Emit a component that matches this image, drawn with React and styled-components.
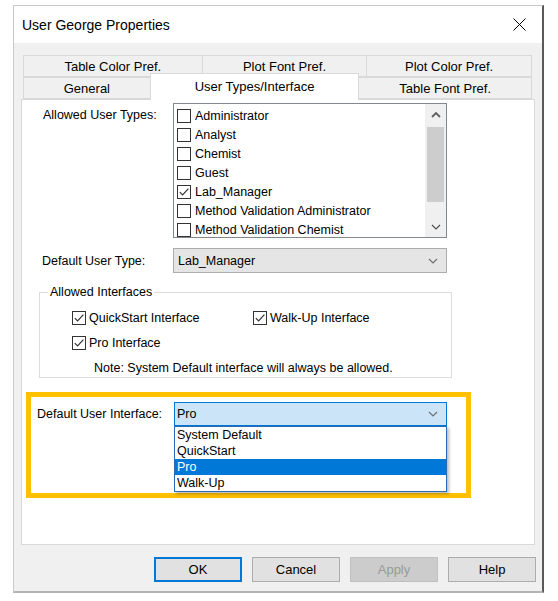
import React from "react";
import styled, { createGlobalStyle } from "styled-components";

const GlobalStyle = createGlobalStyle`
  body {
    margin: 0;
    background: #ffffff;
    font-family: "Liberation Sans", Arial, sans-serif;
    color: #000;
  }
  * { box-sizing: border-box; }
`;

const Page = styled.div`
  padding: 5px 0 0 13px;
`;

const Window = styled.div`
  width: 531px;
  height: 588px;
  display: flex;
  flex-direction: column;
  background: #f0f0f0;
  border-left: 1px solid #c8c8c8;
  border-top: 1px solid #c8c8c8;
  border-right: 2px solid #5a5a5a;
  border-bottom: 2px solid #b4b4b4;
`;

const TitleBar = styled.div`
  height: 37px;
  background: #ffffff;
  display: flex;
  align-items: center;
  justify-content: space-between;
  padding: 0 16px 0 8px;
  font-size: 14px;
`;

const Body = styled.div`
  flex: 1;
  padding: 12px 7px 0 7px;
  display: flex;
  flex-direction: column;
`;

const TabStrip = styled.div`
  padding: 0 3px 0 2px;
`;

const TabRow = styled.div`
  display: flex;
  align-items: flex-end;
  height: 22px;
`;

const Tab = styled.div`
  width: ${(p) => p.$w}px;
  height: ${(p) => (p.$active ? 27 : 22)}px;
  margin-bottom: ${(p) => (p.$active ? -1 : 0)}px;
  margin-left: -1px;
  position: ${(p) => (p.$active ? "relative" : "static")};
  z-index: ${(p) => (p.$active ? 2 : "auto")};
  background: ${(p) => (p.$active ? "#ffffff" : "#f0f0f0")};
  border: 1px solid #d9d9d9;
  border-bottom: ${(p) => (p.$active ? "none" : "1px solid #d9d9d9")};
  font-size: 13px;
  display: flex;
  align-items: center;
  justify-content: center;
  padding-bottom: ${(p) => (p.$active ? 2 : 0)}px;
  &:first-child { margin-left: 0; }
`;

const Panel = styled.div`
  height: 446px;
  background: #ffffff;
  border: 1px solid #d9d9d9;
  padding: 3px 0 0 0;
  display: flex;
  flex-direction: column;
`;

const FieldRow = styled.div`
  display: grid;
  grid-template-columns: 151px 274px;
  align-items: ${(p) => (p.$center ? "center" : "start")};
  margin-top: ${(p) => p.$top || 0}px;
`;

const Label = styled.div`
  font-size: 12.5px;
  padding-left: ${(p) => p.$indent}px;
  padding-top: ${(p) => p.$dy || 0}px;
  white-space: nowrap;
`;

const ListBox = styled.div`
  height: 135px;
  border: 1px solid #828790;
  display: flex;
  background: #fff;
`;

const ListItems = styled.div`
  flex: 1;
  overflow: hidden;
  padding-top: 2px;
`;

const ListItem = styled.div`
  height: 19px;
  display: flex;
  align-items: center;
  gap: 4px;
  padding-left: 3px;
  font-size: 12.5px;
  white-space: nowrap;
`;

const Scrollbar = styled.div`
  width: 21px;
  background: #f0f0f0;
  display: flex;
  flex-direction: column;
  align-items: center;
`;

const ScrollArrow = styled.div`
  height: 21px;
  display: flex;
  align-items: center;
  justify-content: center;
`;

const Thumb = styled.div`
  width: 17px;
  height: 75px;
  margin-top: 2px;
  background: #cdcdcd;
`;

const Spacer = styled.div`
  flex: 1;
`;

const Box = styled.span`
  width: 14px;
  height: 14px;
  flex: none;
  border: 1px solid #333333;
  background: #ffffff;
  display: inline-flex;
  align-items: center;
  justify-content: center;
`;

const Combo = styled.div`
  height: ${(p) => p.$h}px;
  display: flex;
  align-items: center;
  justify-content: space-between;
  padding: 0 8px 0 ${(p) => p.$pad}px;
  font-size: 12.5px;
  background: ${(p) => (p.$focus ? "#cce4f7" : "#e5e5e5")};
  border: 1px solid ${(p) => (p.$focus ? "#0078d7" : "#adadad")};
`;

const Group = styled.fieldset`
  margin: 12px 0 0 17px;
  width: 413px;
  height: 93px;
  padding: 0;
  border: 1px solid #dcdcdc;
  min-width: 0;
`;

const Legend = styled.legend`
  margin-left: 8px;
  padding: 0 2px;
  font-size: 12.5px;
  line-height: 14px;
`;

const InterfaceGrid = styled.div`
  display: grid;
  grid-template-columns: 181px auto;
  grid-auto-rows: 25px;
  align-items: center;
  padding-left: 32px;
  margin-top: 6px;
`;

const Option = styled.label`
  display: flex;
  align-items: center;
  gap: 3px;
  font-size: 12.5px;
  white-space: nowrap;
`;

const Note = styled.div`
  font-size: 12.5px;
  padding-left: 54px;
  margin-top: 4px;
  line-height: 18px;
`;

const Highlight = styled.div`
  margin: 14px 0 0 4px;
  width: 445px;
  height: 106px;
  border: 5px solid #ffc000;
  padding: 5px 0 1px 6px;
  display: grid;
  grid-template-columns: 137px 273px;
  align-items: start;
`;

const InlineLabel = styled.div`
  font-size: 12.5px;
  line-height: 24px;
  white-space: nowrap;
`;

const DropColumn = styled.div`
  display: flex;
  flex-direction: column;
`;

const DropList = styled.div`
  border: 1px solid #2b6cb0;
  background: #ffffff;
  box-shadow: 2px 2px 3px rgba(0, 0, 0, 0.28);
`;

const DropItem = styled.div`
  height: 16px;
  line-height: 16px;
  padding-left: 2px;
  font-size: 12.5px;
  background: ${(p) => (p.$selected ? "#0078d7" : "transparent")};
  color: ${(p) => (p.$selected ? "#ffffff" : "#000000")};
`;

const ButtonRow = styled.div`
  display: flex;
  justify-content: flex-end;
  gap: 10px;
  margin: 12px -1px 0 0;
`;

const Button = styled.button`
  width: 88px;
  height: 25px;
  font-family: inherit;
  font-size: 13px;
  padding: 0;
  background: ${(p) => (p.disabled ? "#cccccc" : "#e1e1e1")};
  color: ${(p) => (p.disabled ? "#9a9a9a" : "#000000")};
  border: ${(p) =>
    p.$default ? "2px solid #0078d7" : p.disabled ? "1px solid #bfbfbf" : "1px solid #adadad"};
`;

const CheckBox = ({ checked }) => (
  <Box>
    {checked && (
      <svg width="12" height="12" viewBox="0 0 12 12">
        <path d="M1.8 6.2 L4.6 9 L10.4 2.6" fill="none" stroke="#333" strokeWidth="1.2" />
      </svg>
    )}
  </Box>
);

const Chevron = ({ up, color = "#606060" }) => (
  <svg width="10" height="6" viewBox="0 0 10 6">
    <path
      d={up ? "M1 5 L5 1 L9 5" : "M1 1 L5 5 L9 1"}
      fill="none"
      stroke={color}
      strokeWidth={up ? 1.8 : 1.2}
    />
  </svg>
);

const userTypes = [
  { name: "Administrator" },
  { name: "Analyst" },
  { name: "Chemist" },
  { name: "Guest" },
  { name: "Lab_Manager", checked: true },
  { name: "Method Validation Administrator" },
  { name: "Method Validation Chemist" },
];

const interfaces = ["System Default", "QuickStart", "Pro", "Walk-Up"];

export default function App() {
  return (
    <>
      <GlobalStyle />
      <Page>
        <Window>
          <TitleBar>
            <span>User George Properties</span>
            <svg width="13" height="13" viewBox="0 0 13 13">
              <path d="M0.5 0.5 L12.5 12.5 M12.5 0.5 L0.5 12.5" stroke="#000" strokeWidth="1" />
            </svg>
          </TitleBar>
          <Body>
            <TabStrip>
              <TabRow>
                <Tab $w={180}>Table Color Pref.</Tab>
                <Tab $w={166}>Plot Font Pref.</Tab>
                <Tab $w={166}>Plot Color Pref.</Tab>
              </TabRow>
              <TabRow>
                <Tab $w={128}>General</Tab>
                <Tab $w={210} $active>User Types/Interface</Tab>
                <Tab $w={174}>Table Font Pref.</Tab>
              </TabRow>
            </TabStrip>
            <Panel>
              <FieldRow>
                <Label $indent={21} $dy={5}>Allowed User Types:</Label>
                <ListBox>
                  <ListItems>
                    {userTypes.map((u) => (
                      <ListItem key={u.name}>
                        <CheckBox checked={u.checked} />
                        {u.name}
                      </ListItem>
                    ))}
                  </ListItems>
                  <Scrollbar>
                    <ScrollArrow>
                      <Chevron up />
                    </ScrollArrow>
                    <Thumb />
                    <Spacer />
                    <ScrollArrow>
                      <Chevron color="#505050" />
                    </ScrollArrow>
                  </Scrollbar>
                </ListBox>
              </FieldRow>
              <FieldRow $top={10} $center>
                <Label $indent={20}>Default User Type:</Label>
                <Combo $h={25} $pad={4}>
                  <span>Lab_Manager</span>
                  <Chevron color="#707070" />
                </Combo>
              </FieldRow>
              <Group>
                <Legend>Allowed Interfaces</Legend>
                <InterfaceGrid>
                  <Option>
                    <CheckBox checked />
                    QuickStart Interface
                  </Option>
                  <Option>
                    <CheckBox checked />
                    Walk-Up Interface
                  </Option>
                  <Option>
                    <CheckBox checked />
                    Pro Interface
                  </Option>
                </InterfaceGrid>
                <Note>Note: System Default interface will always be allowed.</Note>
              </Group>
              <Highlight>
                <InlineLabel>Default User Interface:</InlineLabel>
                <DropColumn>
                  <Combo $h={24} $focus $pad={2}>
                    <span>Pro</span>
                    <Chevron color="#707070" />
                  </Combo>
                  <DropList>
                    {interfaces.map((i) => (
                      <DropItem key={i} $selected={i === "Pro"}>
                        {i}
                      </DropItem>
                    ))}
                  </DropList>
                </DropColumn>
              </Highlight>
            </Panel>
            <ButtonRow>
              <Button $default>OK</Button>
              <Button>Cancel</Button>
              <Button disabled>Apply</Button>
              <Button>Help</Button>
            </ButtonRow>
          </Body>
        </Window>
      </Page>
    </>
  );
}
